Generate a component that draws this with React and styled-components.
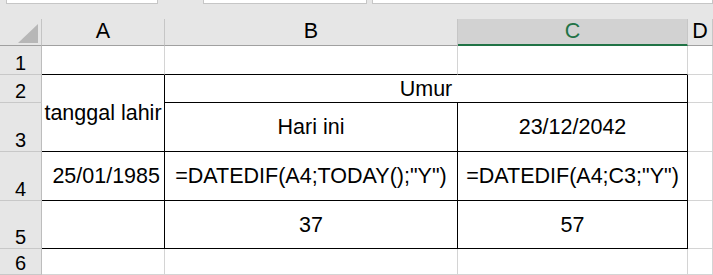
import React from "react";
import styled, { createGlobalStyle } from "styled-components";

const GRID = "#d4d4d4";
const INK = "#000";

const GlobalStyle = createGlobalStyle`
  html, body {
    margin: 0;
    padding: 0;
    background: #fff;
    overflow: hidden;
  }
  body {
    font-family: "Liberation Sans", Arial, sans-serif;
  }
`;

const Page = styled.div`
  display: flex;
  flex-direction: column;
  height: 100vh;
  width: 100vw;
`;

const TopStrip = styled.div`
  display: flex;
  align-items: flex-start;
  height: 19px;
  flex-shrink: 0;
  background: #e6e6e6;
  padding-left: 6px;
`;

const InputBox = styled.div`
  box-sizing: border-box;
  height: 4px;
  width: ${(p) => (p.$w ? `${p.$w}px` : "auto")};
  flex: ${(p) => (p.$w ? "none" : "1")};
  margin-left: ${(p) => p.$ml || 0}px;
  background: #fff;
  border: 1px solid #c6c6c6;
  border-top: none;
`;

const Sheet = styled.div`
  flex: 1;
  display: grid;
  grid-template-columns: 42px 123px 293px 230px 1fr;
  grid-template-rows: 27px 29px 28px 49px 49px 48px 1fr;
  min-height: 0;
`;

const Corner = styled.div`
  position: relative;
  background: #e6e6e6;
  border-right: 1px solid #c4c4c4;
  border-bottom: 1px solid #a0a0a0;
  box-sizing: border-box;

  svg {
    position: absolute;
    left: 0;
    top: 0;
  }
`;

const ColHead = styled.div`
  box-sizing: border-box;
  display: flex;
  align-items: center;
  justify-content: center;
  background: ${(p) => (p.$active ? "#d2d2d2" : "#e6e6e6")};
  color: ${(p) => (p.$active ? "#217346" : INK)};
  border-right: 1px solid #c6c6c6;
  border-bottom: ${(p) => (p.$active ? "2px solid #217346" : "1px solid #a0a0a0")};
  font-size: 21.5px;
  line-height: 1;
  padding-top: ${(p) => (p.$active ? 1 : 0)}px;
`;

const RowHead = styled.div`
  box-sizing: border-box;
  display: flex;
  align-items: flex-end;
  justify-content: center;
  background: #e6e6e6;
  color: ${INK};
  border-right: 1px solid #bdbdbd;
  border-bottom: 1px solid #c8c8c8;
  font-size: 20px;
  line-height: 22px;
  overflow: hidden;
`;

const Cell = styled.div`
  box-sizing: border-box;
  display: flex;
  align-items: center;
  justify-content: ${(p) =>
    p.$align === "right" ? "flex-end" : p.$align === "left" ? "flex-start" : "center"};
  padding: 0 ${(p) => (p.$align === "right" ? 4 : 0)}px 0 0;
  grid-column: ${(p) => p.$col || "auto"};
  grid-row: ${(p) => p.$row || "auto"};
  border-right: 1px solid ${(p) => (p.$br ? INK : GRID)};
  border-bottom: 1px solid ${(p) => (p.$bb ? INK : GRID)};
  background: #fff;
  color: ${INK};
  font-size: 21.5px;
  line-height: 24px;
  white-space: nowrap;
  overflow: hidden;
`;

const CornerMark = () => (
  <svg width="42" height="27" viewBox="0 0 42 27">
    <polygon points="18,24 38,24 38,5" fill="#b7b7b7" />
  </svg>
);

export default function App() {
  return (
    <Page>
      <GlobalStyle />
      <TopStrip>
        <InputBox $w={152} />
        <InputBox $w={164} $ml={45} />
        <InputBox $ml={5} />
      </TopStrip>
      <Sheet>
        <Corner>
          <CornerMark />
        </Corner>
        <ColHead>A</ColHead>
        <ColHead>B</ColHead>
        <ColHead $active>C</ColHead>
        <ColHead>D</ColHead>

        <RowHead>1</RowHead>
        <Cell $bb />
        <Cell $bb />
        <Cell $bb />
        <Cell />

        <RowHead>2</RowHead>
        <Cell $col="2" $row="3 / span 2" $br $bb>
          tanggal lahir
        </Cell>
        <Cell $col="3 / span 2" $row="3" $br $bb>
          Umur
        </Cell>
        <Cell $col="5" $row="3" />

        <RowHead>3</RowHead>
        <Cell $col="3" $row="4" $br $bb>
          Hari ini
        </Cell>
        <Cell $col="4" $row="4" $br $bb>
          23/12/2042
        </Cell>
        <Cell $col="5" $row="4" />

        <RowHead>4</RowHead>
        <Cell $align="right" $br $bb>
          25/01/1985
        </Cell>
        <Cell $br $bb>
          =DATEDIF(A4;TODAY();"Y")
        </Cell>
        <Cell $br $bb>
          =DATEDIF(A4;C3;"Y")
        </Cell>
        <Cell />

        <RowHead>5</RowHead>
        <Cell $br $bb />
        <Cell $br $bb>
          37
        </Cell>
        <Cell $br $bb>
          57
        </Cell>
        <Cell />

        <RowHead>6</RowHead>
        <Cell />
        <Cell />
        <Cell />
        <Cell />
      </Sheet>
    </Page>
  );
}
